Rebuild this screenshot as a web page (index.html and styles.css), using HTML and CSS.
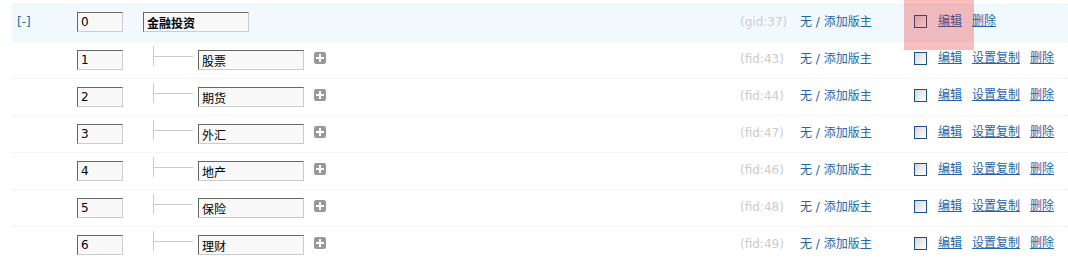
FILE: index.html
```html
<!DOCTYPE html>
<html>
<head>
<meta charset="utf-8">
<link rel="stylesheet" href="styles.css">
</head>
<body>
<div class="page">
  <div class="tb">
    <div class="row hover">
      <div class="c1"><a class="toggle">[-]</a></div>
      <div class="c2"><input class="txt order" value="0"></div>
      <div class="c3"><input class="txt name bold" value="金融投资"></div>
      <div class="c4"><span class="lightfont">(gid:37)</span></div>
      <div class="c5"><a class="mod">无 / 添加版主</a></div>
      <div class="c6"><span class="cb"></span><a class="lk">编辑</a><a class="lk">删除</a></div>
    </div>
    <div class="row">
      <div class="c1"></div>
      <div class="c2"><input class="txt order" value="1"></div>
      <div class="c3"><span class="board"></span><input class="txt name" value="股票"><span class="plus"></span></div>
      <div class="c4"><span class="lightfont">(fid:43)</span></div>
      <div class="c5"><a class="mod">无 / 添加版主</a></div>
      <div class="c6"><span class="cb"></span><a class="lk">编辑</a><a class="lk">设置复制</a><a class="lk">删除</a></div>
    </div>
    <div class="row">
      <div class="c1"></div>
      <div class="c2"><input class="txt order" value="2"></div>
      <div class="c3"><span class="board"></span><input class="txt name" value="期货"><span class="plus"></span></div>
      <div class="c4"><span class="lightfont">(fid:44)</span></div>
      <div class="c5"><a class="mod">无 / 添加版主</a></div>
      <div class="c6"><span class="cb"></span><a class="lk">编辑</a><a class="lk">设置复制</a><a class="lk">删除</a></div>
    </div>
    <div class="row">
      <div class="c1"></div>
      <div class="c2"><input class="txt order" value="3"></div>
      <div class="c3"><span class="board"></span><input class="txt name" value="外汇"><span class="plus"></span></div>
      <div class="c4"><span class="lightfont">(fid:47)</span></div>
      <div class="c5"><a class="mod">无 / 添加版主</a></div>
      <div class="c6"><span class="cb"></span><a class="lk">编辑</a><a class="lk">设置复制</a><a class="lk">删除</a></div>
    </div>
    <div class="row">
      <div class="c1"></div>
      <div class="c2"><input class="txt order" value="4"></div>
      <div class="c3"><span class="board"></span><input class="txt name" value="地产"><span class="plus"></span></div>
      <div class="c4"><span class="lightfont">(fid:46)</span></div>
      <div class="c5"><a class="mod">无 / 添加版主</a></div>
      <div class="c6"><span class="cb"></span><a class="lk">编辑</a><a class="lk">设置复制</a><a class="lk">删除</a></div>
    </div>
    <div class="row">
      <div class="c1"></div>
      <div class="c2"><input class="txt order" value="5"></div>
      <div class="c3"><span class="board"></span><input class="txt name" value="保险"><span class="plus"></span></div>
      <div class="c4"><span class="lightfont">(fid:48)</span></div>
      <div class="c5"><a class="mod">无 / 添加版主</a></div>
      <div class="c6"><span class="cb"></span><a class="lk">编辑</a><a class="lk">设置复制</a><a class="lk">删除</a></div>
    </div>
    <div class="row">
      <div class="c1"></div>
      <div class="c2"><input class="txt order" value="6"></div>
      <div class="c3"><span class="board"></span><input class="txt name" value="理财"><span class="plus"></span></div>
      <div class="c4"><span class="lightfont">(fid:49)</span></div>
      <div class="c5"><a class="mod">无 / 添加版主</a></div>
      <div class="c6"><span class="cb"></span><a class="lk">编辑</a><a class="lk">设置复制</a><a class="lk">删除</a></div>
    </div>
  </div>
  <div class="highlight"></div>
</div>
</body>
</html>
```

FILE: styles.css
```css
html, body {
  margin: 0;
  padding: 0;
  background: #fff;
  overflow: hidden;
}
body {
  font: 12px/1.5 "DejaVu Sans", Verdana, "Noto Sans CJK SC", sans-serif;
  color: #000;
}
.page {
  position: relative;
  padding: 4px 0 0 12px;
}
.row {
  display: grid;
  grid-template-columns: 58px 67px 598px 60px 114px 1fr;
  align-items: center;
  height: 36px;
  border-top: 1px dotted #deeffb;
}
.row.hover {
  background: #f2f9fd;
}
.row > div {
  display: flex;
  align-items: center;
  height: 100%;
}
.c1 { padding-left: 5px; }
.c2 { padding-left: 7px; }
.c3 { padding-left: 6px; }
.c4 { padding-left: 5px; }
.c5 { padding-left: 5px; }
.c6 { padding-left: 5px; padding-bottom: 4px; box-sizing: border-box; }
.toggle {
  color: #2366a8;
  text-decoration: none;
  margin-top: -2px;
}
.txt {
  box-sizing: border-box;
  height: 20px;
  margin: 0;
  padding: 0 3px;
  border: 1px solid;
  border-color: #666 #ccc #ccc #666;
  background: #f9f9f9;
  font: 12px "DejaVu Sans", "Noto Sans CJK SC", sans-serif;
  color: #000;
  outline: none;
}
.row.hover .txt { margin-top: -2px; }
.order { width: 46px; }
.name { width: 106px; }
.bold { font-weight: bold; }
.board {
  position: relative;
  width: 44px;
  height: 20px;
  margin-left: 10px;
  border-left: 1px solid #ccc;
  margin-top: -8px;
}
.board::after {
  content: "";
  position: absolute;
  left: 0;
  top: 10px;
  width: 39px;
  border-top: 1px solid #ccc;
}
.plus {
  position: relative;
  width: 12px;
  height: 12px;
  margin-left: 10px;
  margin-top: -4px;
  background: #999;
  border-radius: 2px;
}
.plus::before, .plus::after {
  content: "";
  position: absolute;
  background: #fff;
}
.plus::before { left: 2px; top: 5px; width: 8px; height: 2px; }
.plus::after { left: 5px; top: 2px; width: 2px; height: 8px; }
.lightfont {
  color: #ccc;
  white-space: nowrap;
  margin-top: -2px;
}
.mod {
  color: #2366a8;
  text-decoration: none;
  white-space: nowrap;
  margin-top: -2px;
}
.cb {
  box-sizing: border-box;
  width: 13px;
  height: 13px;
  border: 1px solid #1f4f82;
  background: linear-gradient(135deg, #d6d6d6, #ffffff);
  margin-right: 11px;
  flex: none;
}
.lk {
  color: #2366a8;
  text-decoration: underline;
  margin-right: 10px;
  white-space: nowrap;
}
.highlight {
  position: absolute;
  left: 904px;
  top: 0;
  width: 70px;
  height: 50px;
  background: rgba(230, 0, 0, 0.25);
  pointer-events: none;
}
```
